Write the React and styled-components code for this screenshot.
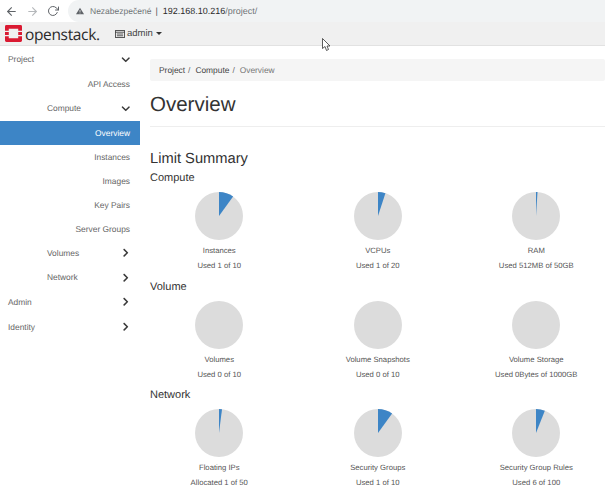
import React from "react";
import styled, { createGlobalStyle } from "styled-components";
import { FiArrowLeft, FiArrowRight, FiRotateCw } from "react-icons/fi";
import { FaChevronDown, FaChevronRight } from "react-icons/fa";

const GlobalStyle = createGlobalStyle`
  html, body {
    margin: 0;
    padding: 0;
    background: #fff;
    font-family: "Liberation Sans", Arial, sans-serif;
    text-rendering: geometricPrecision;
    overflow: hidden;
  }
`;

const Page = styled.div`
  position: relative;
  width: 605px;
  height: 504px;
  overflow: hidden;
`;

const BrowserBar = styled.div`
  display: flex;
  align-items: center;
  height: 22px;
  padding-left: 5px;
  background: #fff;
`;

const BrowserButton = styled.span`
  display: flex;
  width: 19px;
  margin-right: 2px;
  color: ${({ $off }) => ($off ? "#b5b8bb" : "#5f6368")};
`;

const AddressPill = styled.div`
  display: flex;
  flex: 1;
  align-items: center;
  height: 22px;
  padding-left: 8px;
  border-radius: 11px 0 0 11px;
  background: #f1f3f4;
  font-size: 9px;
  color: #6f7377;
`;

const Warning = styled.svg`
  width: 8px;
  height: 8px;
  margin-right: 6px;
`;

const Status = styled.span`
  font-size: 8.5px;
`;

const Divider = styled.span`
  margin: 0 5px 0 4px;
  color: #555;
`;

const Host = styled.span`
  color: #2b2b2b;
`;

const TopNav = styled.header`
  display: flex;
  align-items: center;
  height: 23px;
  padding-left: 5px;
  background: #f0f0f0;
  border-bottom: 1px solid #e2e2e2;
`;

const LogoMark = styled.svg`
  width: 17px;
  height: 17px;
  margin-right: 3px;
`;

const LogoText = styled.span`
  width: 74px;
  font-family: "Open Sans", sans-serif;
  font-size: 15.5px;
  letter-spacing: -0.35px;
  color: #2a2a2a;
`;

const ProjectPicker = styled.div`
  display: flex;
  align-items: center;
  margin-left: 16px;
  font-size: 9.5px;
  color: #444;
`;

const Caret = styled.span`
  width: 0;
  height: 0;
  margin-left: 3px;
  border-top: 3px solid #333;
  border-left: 3px solid transparent;
  border-right: 3px solid transparent;
`;

const Cursor = styled.svg`
  position: absolute;
  left: 322px;
  top: 38px;
  width: 9px;
  height: 13px;
`;

const Body = styled.div`
  display: flex;
`;

const Sidebar = styled.nav`
  flex: none;
  width: 140px;
  padding-top: 1px;
`;

const NavRow = styled.div`
  display: flex;
  align-items: center;
  justify-content: ${({ $left }) => ($left ? "flex-start" : "flex-end")};
  height: ${({ $short }) => ($short ? "23.8px" : "24.6px")};
  padding-left: ${({ $left }) => ($left ? "8px" : "0")};
  padding-right: ${({ $pad }) => $pad}px;
  box-sizing: border-box;
  font-size: 8.4px;
  color: ${({ $active }) => ($active ? "#fff" : "#666")};
  background: ${({ $active }) => ($active ? "#3d85c6" : "none")};
`;

const NavChevron = styled.span`
  display: flex;
  margin-left: auto;
  margin-right: 10px;
  font-size: 9.5px;
  color: #3a3a3a;
`;

const ParentLabel = styled.span`
  margin-left: 39px;
  white-space: nowrap;
`;

const Main = styled.main`
  flex: 1;
  padding: 13px 0 0 10px;
  min-width: 0;
`;

const Breadcrumb = styled.div`
  display: flex;
  align-items: center;
  height: 22px;
  padding-left: 9px;
  border-radius: 2px;
  background: #f5f5f5;
  font-size: 8.4px;
  color: #444;
`;

const Crumb = styled.span`
  color: ${({ $current }) => ($current ? "#777" : "#444")};
  &:not(:last-child)::after {
    content: "/";
    margin: 0 5px 0 3px;
    color: #666;
  }
`;

const PageHeader = styled.div`
  height: 34px;
  margin-top: 11px;
  border-bottom: 1px solid #eee;
`;

const Title = styled.h1`
  margin: 0;
  font-size: 20.5px;
  line-height: 26px;
  font-weight: 400;
  color: #333;
`;

const SummaryTitle = styled.h2`
  margin: 24px 0 0;
  font-size: 14.7px;
  line-height: 17px;
  font-weight: 400;
  color: #333;
`;

const GroupTitle = styled.h3`
  margin: ${({ $first }) => ($first ? "1px" : "0")} 0 0;
  padding-top: 2px;
  font-size: 11px;
  line-height: 14px;
  font-weight: 400;
  color: #333;
`;

const PieGrid = styled.div`
  display: grid;
  grid-template-columns: repeat(3, 158.5px);
  height: 85.5px;
  margin-left: -10px;
  padding-top: 7px;
`;

const PieCell = styled.div`
  display: flex;
  flex-direction: column;
  align-items: center;
`;

const PieSvg = styled.svg`
  width: 48px;
  height: 48px;
  margin-bottom: 3px;
`;

const PieLabel = styled.div`
  font-size: 7.7px;
  line-height: 15px;
  color: #555;
  white-space: nowrap;
`;

function Pie({ used, max }) {
  const angle = (used / max) * 2 * Math.PI;
  const x = 24 + 24 * Math.sin(angle);
  const y = 24 - 24 * Math.cos(angle);
  return (
    <PieSvg viewBox="0 0 48 48">
      <circle cx="24" cy="24" r="24" fill="#dcdcdc" />
      {used > 0 && <path d={`M24 24 L24 0 A24 24 0 0 1 ${x} ${y} Z`} fill="#3d85c6" />}
    </PieSvg>
  );
}

const groups = [
  {
    name: "Compute",
    items: [
      { label: "Instances", text: "Used 1 of 10", used: 1, max: 10 },
      { label: "VCPUs", text: "Used 1 of 20", used: 1, max: 20 },
      { label: "RAM", text: "Used 512MB of 50GB", used: 512, max: 51200 },
    ],
  },
  {
    name: "Volume",
    items: [
      { label: "Volumes", text: "Used 0 of 10", used: 0, max: 10 },
      { label: "Volume Snapshots", text: "Used 0 of 10", used: 0, max: 10 },
      { label: "Volume Storage", text: "Used 0Bytes of 1000GB", used: 0, max: 1000 },
    ],
  },
  {
    name: "Network",
    items: [
      { label: "Floating IPs", text: "Allocated 1 of 50", used: 1, max: 50 },
      { label: "Security Groups", text: "Used 1 of 10", used: 1, max: 10 },
      { label: "Security Group Rules", text: "Used 6 of 100", used: 6, max: 100 },
    ],
  },
];

const navItems = [
  { name: "Project", left: true, icon: "down" },
  { name: "API Access", pad: 10 },
  { name: "Compute", icon: "down", parent: true },
  { name: "Overview", active: true, pad: 10 },
  { name: "Instances", pad: 10, short: true },
  { name: "Images", pad: 10, short: true },
  { name: "Key Pairs", pad: 10, short: true },
  { name: "Server Groups", pad: 10, short: true },
  { name: "Volumes", icon: "right", parent: true },
  { name: "Network", icon: "right", parent: true },
  { name: "Admin", left: true, icon: "right" },
  { name: "Identity", left: true, icon: "right" },
];

export default function App() {
  return (
    <Page>
      <GlobalStyle />
      <BrowserBar>
        <BrowserButton><FiArrowLeft size={13} /></BrowserButton>
        <BrowserButton $off><FiArrowRight size={13} /></BrowserButton>
        <BrowserButton><FiRotateCw size={12} /></BrowserButton>
        <AddressPill>
          <Warning viewBox="0 0 24 24">
            <path d="M12 2 L24 22 H0 Z" fill="#5f6368" />
            <rect x="11" y="9" width="2" height="7" fill="#fff" />
            <rect x="11" y="17.5" width="2" height="2" fill="#fff" />
          </Warning>
          <Status>Nezabezpečené</Status>
          <Divider>|</Divider>
          <Host>192.168.10.216</Host>/project/
        </AddressPill>
      </BrowserBar>

      <TopNav>
        <LogoMark viewBox="0 0 18 18">
          <path
            d="M1.5 0 H16.5 A1.5 1.5 0 0 1 18 1.5 V6 H14 V4 H4 V6 H0 V1.5 A1.5 1.5 0 0 1 1.5 0 Z M0 12 H4 V14 H14 V12 H18 V16.5 A1.5 1.5 0 0 1 16.5 18 H1.5 A1.5 1.5 0 0 1 0 16.5 Z M0 7.5 H4 V10.5 H0 Z M14 7.5 H18 V10.5 H14 Z"
            fill="#da1a32"
          />
        </LogoMark>
        <LogoText>openstack.</LogoText>
        <ProjectPicker>
          <svg width="10" height="8" viewBox="0 0 11 9" style={{ marginRight: 2 }}>
            <rect x="0.5" y="0.5" width="10" height="8" fill="none" stroke="#444" />
            <path d="M0 2.5 H11 M2 4.5 H9 M2 6.5 H9" stroke="#444" />
          </svg>
          admin
          <Caret />
        </ProjectPicker>
      </TopNav>

      <Cursor viewBox="0 0 9 13">
        <path d="M0.5 0.5 V10.5 L3 8.5 L4.5 12.5 L6.5 11.5 L5 8 H8 Z" fill="#fff" stroke="#333" strokeWidth="0.8" />
      </Cursor>

      <Body>
        <Sidebar>
          {navItems.map((item) => (
            <NavRow
              key={item.name}
              $left={item.left || item.parent}
              $active={item.active}
              $short={item.short}
              $pad={item.pad || 0}
            >
              {item.parent ? <ParentLabel>{item.name}</ParentLabel> : item.name}
              {item.icon && (
                <NavChevron>
                  {item.icon === "down" ? <FaChevronDown /> : <FaChevronRight />}
                </NavChevron>
              )}
            </NavRow>
          ))}
        </Sidebar>
        <Main>
          <Breadcrumb>
            <Crumb>Project</Crumb>
            <Crumb>Compute</Crumb>
            <Crumb $current>Overview</Crumb>
          </Breadcrumb>
          <PageHeader>
            <Title>Overview</Title>
          </PageHeader>
          <SummaryTitle>Limit Summary</SummaryTitle>
          {groups.map((group, i) => (
            <div key={group.name}>
              <GroupTitle $first={i === 0}>{group.name}</GroupTitle>
              <PieGrid>
                {group.items.map((item) => (
                  <PieCell key={item.label}>
                    <Pie used={item.used} max={item.max} />
                    <PieLabel>{item.label}</PieLabel>
                    <PieLabel>{item.text}</PieLabel>
                  </PieCell>
                ))}
              </PieGrid>
            </div>
          ))}
        </Main>
      </Body>
    </Page>
  );
}
